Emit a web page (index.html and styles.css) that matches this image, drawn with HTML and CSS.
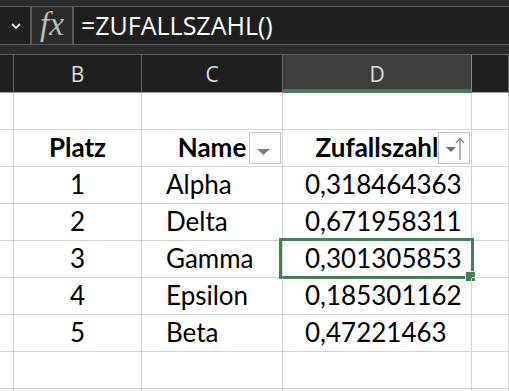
FILE: index.html
```html
<!DOCTYPE html>
<html lang="de">
<head>
  <meta charset="UTF-8">
  <title>Zufallszahl</title>
  <link rel="stylesheet" href="styles.css">
</head>
<body>
<div class="app">
  <div class="top-strip"></div>

  <!-- Bearbeitungsleiste -->
  <div class="formula-bar">
    <div class="name-box">
      <svg width="10" height="6" viewBox="0 0 10 6"><polyline points="1,1 5,5 9,1" fill="none" stroke="#e6e6e6" stroke-width="1.8"/></svg>
    </div>
    <div class="fx-box">fx</div>
    <div class="formula">=ZUFALLSZAHL()</div>
  </div>
  <div class="band"></div>

  <!-- Tabelle -->
  <div class="sheet">
    <div class="col-head"></div>
    <div class="col-head">B</div>
    <div class="col-head">C</div>
    <div class="col-head active">D</div>
    <div class="col-head"></div>

    <div class="cell"></div><div class="cell"></div><div class="cell"></div><div class="cell"></div><div class="cell"></div>

    <div class="cell"></div>
    <div class="cell hdr">Platz</div>
    <div class="cell hdr">Name
      <span class="filter-btn">
        <svg width="32" height="32" viewBox="0 0 32 32"><polygon points="8,17 21,17 14.5,23" fill="#808080"/></svg>
      </span>
    </div>
    <div class="cell hdr">Zufallszahl
      <span class="filter-btn">
        <svg width="32" height="32" viewBox="0 0 32 32">
          <polygon points="8,15 18,15 13,20" fill="#707070"/>
          <line x1="22" y1="6.5" x2="22" y2="28" stroke="#8c8c8c" stroke-width="1.4"/>
          <polyline points="18,11 22,6.5 26,11" fill="none" stroke="#8c8c8c" stroke-width="1.4"/>
        </svg>
      </span>
    </div>
    <div class="cell"></div>

    <div class="cell"></div><div class="cell num">1</div><div class="cell name">Alpha</div><div class="cell val">0,318464363</div><div class="cell"></div>
    <div class="cell"></div><div class="cell num">2</div><div class="cell name">Delta</div><div class="cell val">0,671958311</div><div class="cell"></div>
    <div class="cell"></div><div class="cell num">3</div><div class="cell name">Gamma</div>
    <div class="cell val selected">0,301305853<span class="sel-frame"></span><span class="fill-handle"></span></div>
    <div class="cell"></div>
    <div class="cell"></div><div class="cell num">4</div><div class="cell name">Epsilon</div><div class="cell val">0,185301162</div><div class="cell"></div>
    <div class="cell"></div><div class="cell num">5</div><div class="cell name">Beta</div><div class="cell val">0,47221463</div><div class="cell"></div>

    <div class="cell"></div><div class="cell"></div><div class="cell"></div><div class="cell"></div><div class="cell"></div>
    <div class="cell"></div><div class="cell"></div><div class="cell"></div><div class="cell"></div><div class="cell"></div>
  </div>
</div>
</body>
</html>
```

FILE: styles.css
```css
/* Excel Dunkelmodus */
body {
  margin: 0;
  background-color: #fff;
  font-family: 'Lato', 'Noto Sans', sans-serif;
}
.app {
  width: 509px;
  height: 391px;
  overflow: hidden;
}
.top-strip {
  height: 6px;
  background-color: #2b2b2b;
  border-bottom: 1px solid #5e5e5e;
}
.formula-bar {
  display: flex;
  height: 37px;
  background-color: #1f1f1f;
  border-bottom: 1px solid #5e5e5e;
}
.name-box {
  width: 32px;
  display: flex;
  align-items: center;
  padding-left: 11px;
  box-sizing: border-box;
  border-right: 2px solid #5a5a5a;
}
.fx-box {
  width: 40px;
  background-color: #2b2b2b;
  border-right: 2px solid #5a5a5a;
  color: #bdbdbd;
  font-family: 'Liberation Serif', serif;
  font-style: italic;
  font-size: 33px;
  line-height: 35px;
  text-align: center;
}
.formula {
  padding-left: 7px;
  color: #fff;
  font-family: 'Open Sans', sans-serif;
  font-size: 25px;
  line-height: 37px;
}
.band {
  height: 9px;
  background-color: #2b2b2b;
  border-bottom: 1px solid #5e5e5e;
}
.sheet {
  display: grid;
  grid-template-columns: 14px 128px 141px 189px 1fr;
}
.col-head {
  height: 38px;
  box-sizing: border-box;
  padding-top: 2px;
  background-color: #1f1f1f;
  border-right: 1px solid #666;
  border-bottom: 1px solid #9c9c9c;
  color: #e0e0e0;
  font-family: 'Open Sans', sans-serif;
  font-size: 21px;
  line-height: 35px;
  text-align: center;
}
.col-head.active {
  background-color: #3d3d3d;
  border-right-color: #8a8a8a;
  border-bottom-color: #4a7b5b;
  box-shadow: inset 0 -3px 0 #4a7b5b;
}
.cell {
  position: relative;
  height: 37px;
  box-sizing: border-box;
  border-right: 1px solid #d4d4d4;
  border-bottom: 1px solid #d4d4d4;
  color: #000;
  font-size: 26px;
  line-height: 35px;
  white-space: nowrap;
}
.hdr {
  font-weight: bold;
  text-align: center;
}
.num {
  text-align: center;
}
.name {
  padding-left: 24px;
}
.val {
  padding-left: 22px;
}
.filter-btn {
  position: absolute;
  right: 1px;
  top: 2px;
  width: 32px;
  height: 32px;
  box-sizing: border-box;
  background-color: #fff;
  border: 1px solid #c4c4c4;
  display: flex;
}
.filter-btn svg {
  margin: -1px;
}
.sel-frame {
  position: absolute;
  left: -4px;
  top: -3px;
  width: 195px;
  height: 41px;
  box-sizing: border-box;
  border: 3px solid #4a7b5b;
}
.fill-handle {
  position: absolute;
  left: 182px;
  top: 30px;
  width: 9px;
  height: 9px;
  background-color: #4a7b5b;
  border: 1px solid #fff;
}
```
